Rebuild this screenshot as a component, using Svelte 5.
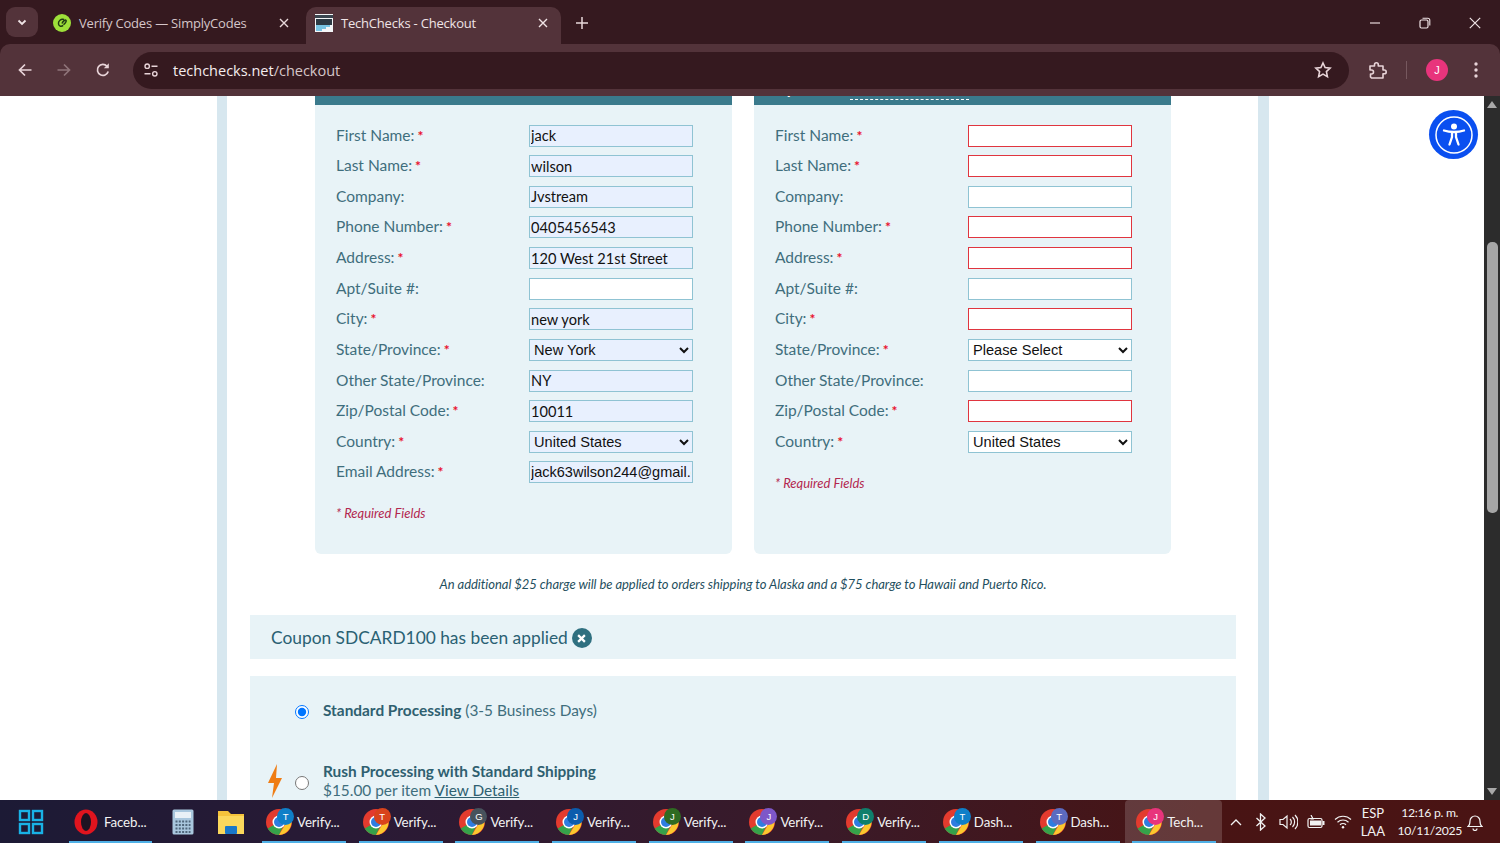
<script>
  // formularios de la pagina de checkout
  const billing = [
    { label: 'First Name:', req: true, value: 'jack' },
    { label: 'Last Name:', req: true, value: 'wilson' },
    { label: 'Company:', value: 'Jvstream' },
    { label: 'Phone Number:', req: true, value: '0405456543' },
    { label: 'Address:', req: true, value: '120 West 21st Street' },
    { label: 'Apt/Suite #:', value: '', blank: true },
    { label: 'City:', req: true, value: 'new york' },
    { label: 'State/Province:', req: true, select: 'New York' },
    { label: 'Other State/Province:', value: 'NY' },
    { label: 'Zip/Postal Code:', req: true, value: '10011' },
    { label: 'Country:', req: true, select: 'United States' },
    { label: 'Email Address:', req: true, value: 'jack63wilson244@gmail.com', mail: true }
  ];

  const shipping = [
    { label: 'First Name:', req: true },
    { label: 'Last Name:', req: true },
    { label: 'Company:' },
    { label: 'Phone Number:', req: true },
    { label: 'Address:', req: true },
    { label: 'Apt/Suite #:' },
    { label: 'City:', req: true },
    { label: 'State/Province:', req: true, select: 'Please Select' },
    { label: 'Other State/Province:' },
    { label: 'Zip/Postal Code:', req: true },
    { label: 'Country:', req: true, select: 'United States' }
  ];

  const apps = [
    { label: 'Verify...', badge: 'T', color: '#0f7fc8' },
    { label: 'Verify...', badge: 'T', color: '#d8431c' },
    { label: 'Verify...', badge: 'G', color: '#47525c' },
    { label: 'Verify...', badge: 'J', color: '#0b5cad' },
    { label: 'Verify...', badge: 'J', color: '#2f6b22' },
    { label: 'Verify...', badge: 'J', color: '#7e57c8' },
    { label: 'Verify...', badge: 'D', color: '#0f7f6c' },
    { label: 'Dash...', badge: 'T', color: '#0f7fc8' },
    { label: 'Dash...', badge: 'T', color: '#5c6bc0' }
  ];
</script>

<div class="screen">
  <header class="browser">
    <div class="tabstrip">
      <button class="tab-menu" aria-label="tabs">
        <svg width="12" height="12" viewBox="0 0 12 12"><path d="M2.5 4.5 6 8l3.5-3.5" fill="none" stroke="#f0e4e6" stroke-width="1.8"/></svg>
      </button>
      <div class="tab">
        <svg class="fav" width="18" height="18" viewBox="0 0 18 18">
          <circle cx="9" cy="9" r="9" fill="#9ee03a"/>
          <path d="M11 5.500C8 4.500 5 7 5.500 10c.4 2.400 3 3 4.600 1.400M9 9.500c.8-2 3-4 4-3.200.9.800-1 3.300-2.600 4.400" fill="none" stroke="#1f3a12" stroke-width="1.500"/>
        </svg>
        <span class="tab-title">Verify Codes — SimplyCodes</span>
        <svg class="close" width="10" height="10" viewBox="0 0 10 10"><path d="M1 1l8 8M9 1 1 9" stroke="#e8d8da" stroke-width="1.400"/></svg>
      </div>
      <div class="tab active">
        <svg class="fav" width="18" height="18" viewBox="0 0 18 18">
          <rect width="18" height="18" fill="#f4f6f8"/>
          <rect y="1" width="18" height="3" fill="#3a4650"/>
          <rect x="1" y="5" width="16" height="6" fill="#2c3a44"/>
          <path d="M1 12h14M1 14h10M1 16h6" stroke="#4fb4dc" stroke-width="1.400"/>
        </svg>
        <span class="tab-title">TechChecks - Checkout</span>
        <svg class="close" width="10" height="10" viewBox="0 0 10 10"><path d="M1 1l8 8M9 1 1 9" stroke="#f0e4e6" stroke-width="1.400"/></svg>
      </div>
      <svg class="plus" width="12" height="12" viewBox="0 0 12 12"><path d="M6 0v12M0 6h12" stroke="#e8d8da" stroke-width="1.500"/></svg>
      <div class="win-controls">
        <svg width="12" height="12" viewBox="0 0 12 12"><path d="M1 6h10" stroke="#e8d8da" stroke-width="1.200"/></svg>
        <svg width="12" height="12" viewBox="0 0 12 12"><rect x="1" y="3" width="8" height="8" rx="1.500" fill="none" stroke="#f0e4e6" stroke-width="1.200"/><path d="M3.500 1.200h5.300a2 2 0 0 1 2 2v5.300" fill="none" stroke="#f0e4e6" stroke-width="1.100"/></svg>
        <svg width="12" height="12" viewBox="0 0 12 12"><path d="M.8.800l10.400 10.400M11.200.800.800 11.200" stroke="#f0e4e6" stroke-width="1.200"/></svg>
      </div>
    </div>
    <div class="toolbar">
      <svg class="nav" width="16" height="16" viewBox="0 0 16 16"><path d="M14.500 8H2.500M8 2.500 2.500 8 8 13.500" fill="none" stroke="#e8d4d8" stroke-width="1.700"/></svg>
      <svg class="nav" width="16" height="16" viewBox="0 0 16 16"><path d="M1.500 8h12M8 2.500 13.500 8 8 13.500" fill="none" stroke="#8f7479" stroke-width="1.700"/></svg>
      <svg class="nav" width="16" height="16" viewBox="0 0 16 16"><path d="M13.200 9.500A5.500 5.500 0 1 1 12 4.200" fill="none" stroke="#e8d4d8" stroke-width="1.700"/><path d="M13.800 1.200v5h-5z" fill="#e8d4d8"/></svg>
      <div class="omnibox">
        <span class="site-info">
          <svg width="16" height="16" viewBox="0 0 16 16"><circle cx="4.200" cy="4.200" r="2.200" fill="none" stroke="#e8d4d8" stroke-width="1.400"/><path d="M8.500 4.200h6M1.500 11.800h6" stroke="#e8d4d8" stroke-width="1.400"/><circle cx="11.800" cy="11.800" r="2.200" fill="none" stroke="#e8d4d8" stroke-width="1.400"/></svg>
        </span>
        <span class="url"><b>techchecks.net</b>/checkout</span>
        <svg class="star" width="18" height="18" viewBox="0 0 18 18"><path d="M9 2l2.100 4.600 5 .6-3.700 3.400 1 5L9 13.100 4.600 15.600l1-5L1.900 7.200l5-.6z" fill="none" stroke="#e8d4d8" stroke-width="1.600"/></svg>
      </div>
      <svg class="ext" width="19" height="19" viewBox="0 0 19 19"><path d="M2 5h4.500V3.700a1.900 1.900 0 0 1 3.800 0V5H15v4h1.300a1.900 1.900 0 0 1 0 3.800H15V17H3.500l-1-1V13h1a2 2 0 0 0 0-4h-1.500z" fill="none" stroke="#e8d4d8" stroke-width="1.600" stroke-linejoin="round"/></svg>
      <span class="sep"></span>
      <span class="avatar">J</span>
      <svg class="dots" width="4" height="16" viewBox="0 0 4 16"><circle cx="2" cy="2" r="1.700" fill="#e8d4d8"/><circle cx="2" cy="8" r="1.700" fill="#e8d4d8"/><circle cx="2" cy="14" r="1.700" fill="#e8d4d8"/></svg>
    </div>
  </header>

  <main class="viewport">
    <div class="page">
      <div class="sheet">
        <div class="forms">
          <section class="panel">
            <h2 class="panel-head">Bill To:</h2>
            <div class="fields">
              {#each billing as f}
                <div class="row">
                  <span class="lbl">{f.label}{#if f.req}<em class="ast">*</em>{/if}</span>
                  {#if f.select}
                    <select class="filled"><option>{f.select}</option></select>
                  {:else}
                    <input class:filled={!f.blank} class:mail={f.mail} value={f.value} />
                  {/if}
                </div>
              {/each}
            </div>
            <p class="required">* Required Fields</p>
          </section>
          <section class="panel">
            <h2 class="panel-head"><span>Ship To:</span> <a href="#same">Same as Billing Info</a></h2>
            <div class="fields">
              {#each shipping as f}
                <div class="row">
                  <span class="lbl">{f.label}{#if f.req}<em class="ast">*</em>{/if}</span>
                  {#if f.select}
                    <select><option>{f.select}</option></select>
                  {:else}
                    <input class:bad={f.req} />
                  {/if}
                </div>
              {/each}
            </div>
            <p class="required">* Required Fields</p>
          </section>
        </div>

        <p class="notice">An additional $25 charge will be applied to orders shipping to Alaska and a $75 charge to Hawaii and Puerto Rico.</p>

        <div class="coupon">
          Coupon SDCARD100 has been applied
          <span class="remove">
            <svg width="9" height="9" viewBox="0 0 8 8"><path d="M1 1l6 6M7 1 1 7" stroke="#fff" stroke-width="2"/></svg>
          </span>
        </div>

        <div class="processing">
          <label class="option first">
            <input type="radio" name="speed" checked />
            <span><b>Standard Processing</b> (3-5 Business Days)</span>
          </label>
          <label class="option">
            <svg class="bolt" width="16" height="34" viewBox="0 0 16 34"><path d="M10 0 1 19h6l-2 15L15 14H9z" fill="#ef7d14"/></svg>
            <input type="radio" name="speed" />
            <span><b>Rush Processing with Standard Shipping</b><br />$15.00 per item <a href="#details">View Details</a></span>
          </label>
        </div>
      </div>
    </div>

    <button class="a11y" aria-label="accessibility">
      <svg width="38" height="38" viewBox="0 0 38 38">
        <circle cx="19" cy="19" r="18" fill="none" stroke="#fff" stroke-width="1.500"/>
        <circle cx="19" cy="10.500" r="3" fill="#fff"/>
        <path d="M9 14.500c3 1 6.500 1.500 10 1.500s7-.5 10-1.500M17 16v5l-2.500 7.500M21 16v5l2.500 7.500" fill="none" stroke="#fff" stroke-width="2.300" stroke-linecap="round"/>
      </svg>
    </button>

    <div class="scrollbar">
      <span class="arrow up"></span>
      <div class="track"><span class="thumb"></span></div>
      <span class="arrow down"></span>
    </div>
  </main>

  <footer class="taskbar">
    <button class="start" aria-label="start">
      <svg width="26" height="26" viewBox="0 0 26 26">
        <g fill="none" stroke="#19b2e6" stroke-width="2.400">
          <rect x="2" y="2" width="9" height="9"/><rect x="15" y="2" width="9" height="9"/>
          <rect x="2" y="15" width="9" height="9"/><rect x="15" y="15" width="9" height="9"/>
        </g>
      </svg>
    </button>
    <div class="task wide">
      <svg width="26" height="26" viewBox="0 0 26 26"><ellipse cx="13" cy="13" rx="11.500" ry="12.500" fill="#e0141e"/><ellipse cx="13" cy="13" rx="5" ry="9" fill="#1e1322"/></svg>
      <span>Faceb...</span>
    </div>
    <div class="task small">
      <svg width="22" height="26" viewBox="0 0 22 26">
        <rect x=".5" y=".5" width="21" height="25" rx="1.500" fill="#a9c7de"/>
        <rect x="3" y="3" width="16" height="6" fill="#e9f1f7"/>
        <path d="M3.500 12.500h15M3.500 16h15M3.500 19.500h15M3.500 23h15" stroke="#50677c" stroke-width="2" stroke-dasharray="2 1.300"/>
      </svg>
    </div>
    <div class="task small last-pin">
      <svg width="28" height="26" viewBox="0 0 28 26">
        <path d="M1 2h10l3 3h13v20H1z" fill="#f5c33b"/>
        <rect x="1" y="7" width="26" height="18" fill="#fbd85c"/>
        <rect x="8" y="17" width="12" height="8" rx="1" fill="#1a78c8"/>
      </svg>
    </div>
    {#each apps as a}
      <div class="task">
        <span class="chrome">
          <svg width="26" height="26" viewBox="0 0 26 26">
            <circle cx="13" cy="13" r="13" fill="#e33b2e"/>
            <path d="M13 13 1.700 19.500A13 13 0 0 0 13 26l6-13z" fill="#35a24a"/>
            <path d="M13 7.500h11.300A13 13 0 0 1 13 26l6.500-11z" fill="#fbc82e"/>
            <circle cx="13" cy="13" r="6.500" fill="#fff"/>
            <circle cx="13" cy="13" r="5" fill="#2f7de1"/>
          </svg>
          <i style="background:{a.color}">{a.badge}</i>
        </span>
        <span>{a.label}</span>
      </div>
    {/each}
    <div class="task current">
      <span class="chrome">
        <svg width="26" height="26" viewBox="0 0 26 26">
          <circle cx="13" cy="13" r="13" fill="#e33b2e"/>
          <path d="M13 13 1.700 19.500A13 13 0 0 0 13 26l6-13z" fill="#35a24a"/>
          <path d="M13 7.500h11.300A13 13 0 0 1 13 26l6.500-11z" fill="#fbc82e"/>
          <circle cx="13" cy="13" r="6.500" fill="#fff"/>
          <circle cx="13" cy="13" r="5" fill="#2f7de1"/>
        </svg>
        <i style="background:#e8347c">J</i>
      </span>
      <span>Tech...</span>
    </div>
    <div class="tray">
      <svg class="chev" width="12" height="8" viewBox="0 0 12 8"><path d="M1 7l5-5 5 5" fill="none" stroke="#f2f2f2" stroke-width="1.300"/></svg>
      <svg class="bt" width="12" height="18" viewBox="0 0 12 18"><path d="M1.500 5l8.500 8-4.500 4V1L10 5l-8.500 8" fill="none" stroke="#f2f2f2" stroke-width="1.300"/></svg>
      <svg width="19" height="16" viewBox="0 0 19 16"><path d="M1 5.500h3L8 2v12l-4-3.500H1z" fill="none" stroke="#f2f2f2" stroke-width="1.200"/><path d="M11 5a4 4 0 0 1 0 6M13.500 3a7 7 0 0 1 0 10M16 1a10 10 0 0 1 0 14" fill="none" stroke="#f2f2f2" stroke-width="1.200"/></svg>
      <svg width="18" height="14" viewBox="0 0 18 14"><rect x="1" y="3.500" width="14" height="9" rx="1.500" fill="none" stroke="#f2f2f2" stroke-width="1.200"/><rect x="3" y="5.500" width="11" height="5" fill="#f2f2f2"/><rect x="15.500" y="6" width="2" height="4" fill="#f2f2f2"/><path d="M4 0l2 4H3.500" fill="none" stroke="#f2f2f2" stroke-width="1.200"/></svg>
      <svg width="18" height="14" viewBox="0 0 18 14"><path d="M1 4.500a11.500 11.500 0 0 1 16 0M3.500 7.200a8 8 0 0 1 11 0M6 9.800a4.300 4.300 0 0 1 6 0" fill="none" stroke="#f2f2f2" stroke-width="1.200"/><circle cx="9" cy="12.300" r="1.200" fill="#f2f2f2"/></svg>
      <div class="lang"><span>ESP</span><span>LAA</span></div>
      <div class="clock"><span>12:16 p. m.</span><span>10/11/2025</span></div>
      <svg class="bell" width="16" height="18" viewBox="0 0 16 18"><path d="M1 13.500c1.500-1 2-2.500 2-5.500a5 5 0 0 1 10 0c0 3 .5 4.500 2 5.500zM6 15.500a2 2 0 0 0 4 0" fill="none" stroke="#f2f2f2" stroke-width="1.200"/></svg>
    </div>
  </footer>
</div>

<style>
  :global(body) {
    margin: 0;
    background: #fff;
  }

  .screen {
    width: 1500px;
    height: 843px;
    display: flex;
    flex-direction: column;
    overflow: hidden;
    font-family: Lato, sans-serif;
  }

  button {
    border: none;
    padding: 0;
    background: none;
  }

  /* NAVEGADOR */
  .browser {
    height: 96px;
    flex: none;
    background: #35191f;
    color: #f0e4e6;
    font-family: "Open Sans", sans-serif;
  }
  .tabstrip {
    height: 44px;
    display: flex;
    align-items: flex-start;
    padding-left: 6px;
    box-sizing: border-box;
  }
  .tab-menu {
    width: 32px;
    height: 30px;
    margin-top: 7px;
    border-radius: 9px;
    background: #53333a;
    display: flex;
    align-items: center;
    justify-content: center;
  }
  .tab {
    width: 264px;
    height: 37px;
    margin-top: 7px;
    display: flex;
    align-items: center;
    padding: 0 8px 6px 15px;
    box-sizing: border-box;
    color: #d6c6c9;
    font-size: 13px;
    letter-spacing: -0.2px;
  }
  .tab.active {
    background: #53333a;
    color: #f0e4e6;
    border-radius: 10px 10px 0 0;
    margin-left: 4px;
    padding-left: 9px;
    width: 255px;
  }
  .fav {
    flex: none;
    margin-right: 8px;
  }
  .tab-title {
    flex: 1;
    white-space: nowrap;
  }
  .close {
    margin-right: 5px;
  }
  .plus {
    margin: 17px 0 0 15px;
  }
  .win-controls {
    margin-left: auto;
    display: flex;
    gap: 38px;
    padding: 17px 19px 0 0;
  }
  .toolbar {
    height: 52px;
    background: #53333a;
    border-radius: 10px 10px 0 0;
    display: flex;
    align-items: center;
    padding-left: 17px;
  }
  .nav {
    margin-right: 23px;
  }
  .omnibox {
    width: 1216px;
    height: 37px;
    margin-left: -1px;
    border-radius: 19px;
    background: #35191f;
    display: flex;
    align-items: center;
    box-sizing: border-box;
    padding: 0 17px 0 10px;
    font-size: 14.5px;
    color: #d6c6c9;
  }
  .site-info {
    width: 16px;
    height: 16px;
    margin-right: 14px;
  }
  .url b {
    font-weight: 400;
    color: #f4ecee;
  }
  .star {
    margin-left: auto;
  }
  .ext {
    margin-left: 19px;
  }
  .sep {
    width: 1px;
    height: 18px;
    background: #76585e;
    margin-left: 19px;
  }
  .avatar {
    width: 22px;
    height: 22px;
    border-radius: 50%;
    background: #e8347c;
    color: #fff;
    font: 11px "Liberation Sans", sans-serif;
    display: flex;
    align-items: center;
    justify-content: center;
    margin-left: 19px;
  }
  .dots {
    margin-left: 26px;
  }

  /* PAGINA */
  .viewport {
    flex: 1;
    min-height: 0;
    position: relative;
    overflow: hidden;
    background: #fff;
  }
  .page {
    width: 1052px;
    margin: -30px 0 0 217px;
    box-sizing: border-box;
    padding: 0 11px 0 10px;
    background: #d7e7ef;
  }
  .sheet {
    background: #fff;
    padding: 0 22px 0 23px;
    height: 900px;
  }
  .forms {
    display: flex;
    gap: 22px;
    margin-left: 65px;
  }
  .panel {
    width: 417px;
    height: 488px;
    background: #e8f3f7;
    border-radius: 0 0 6px 6px;
  }
  .panel-head {
    height: 39px;
    margin: 0;
    box-sizing: border-box;
    padding: 12px 11px 0;
    background: #3a7a8c;
    color: #fff;
    font-size: 16px;
    line-height: 20px;
    font-weight: 700;
    white-space: nowrap;
  }
  .panel-head a {
    color: #fff;
    font-weight: 400;
    font-size: 14px;
    margin-left: 26px;
    padding-bottom: 2px;
    border-bottom: 1px dashed #fff;
    text-decoration: none;
  }
  .fields {
    padding: 19.5px 39px 0 21px;
    display: flex;
    flex-direction: column;
    gap: 8.64px;
  }
  .row {
    display: flex;
    justify-content: space-between;
    height: 22px;
    align-items: flex-start;
  }
  .lbl {
    color: #3f6e7d;
    font-size: 15.5px;
    line-height: 20px;
  }
  .ast {
    color: #e8112d;
    font-style: normal;
    font-weight: 700;
    font-size: 14px;
    margin-left: 3px;
  }
  input:not([type='radio']),
  select {
    width: 164px;
    height: 22px;
    box-sizing: border-box;
    border: 1.5px solid #8fc3d3;
    border-radius: 0;
    background: #fff;
    padding: 0 1px;
    color: #111;
    font-family: Lato, sans-serif;
    font-size: 14.6px;
    outline: none;
  }
  input.filled {
    background: #e8f0fe;
  }
  input.mail {
    font-family: "Liberation Sans", sans-serif;
    font-size: 14.5px;
  }
  input.bad {
    border-color: #e0353f;
  }
  select {
    font-family: "Liberation Sans", sans-serif;
    font-size: 14.6px;
    padding: 0;
  }
  select.filled {
    background: #e8f0fe;
  }
  .required {
    margin: 22px 21px 0;
    color: #b3274f;
    font-size: 13px;
    font-style: italic;
  }
  .notice {
    margin: 21px 0 0;
    text-align: center;
    color: #1f4f5e;
    font-size: 13px;
    line-height: 18px;
    font-style: italic;
    letter-spacing: -0.05px;
  }
  .coupon {
    margin-top: 22px;
    height: 44px;
    background: #e8f3f7;
    display: flex;
    align-items: center;
    gap: 4px;
    padding-left: 21px;
    color: #2a6173;
    font-size: 17.35px;
  }
  .remove {
    width: 20px;
    height: 20px;
    border-radius: 50%;
    background: #2f7080;
    display: flex;
    align-items: center;
    justify-content: center;
    margin-top: 2px;
  }
  .processing {
    margin-top: 17px;
    background: #e8f3f7;
    padding: 25px 0 0 45px;
    color: #3f6e7d;
    font-size: 15.4px;
    line-height: 19px;
    height: 200px;
    box-sizing: border-box;
  }
  .processing b {
    color: #2f6070;
  }
  .processing a {
    color: #2f6070;
  }
  .option {
    display: flex;
    align-items: flex-start;
    gap: 14px;
    position: relative;
  }
  .option.first {
    margin-bottom: 42px;
  }
  .option input {
    width: 14px;
    height: 14px;
    margin: 4px 0 0;
    flex: none;
  }
  .option:not(.first) input {
    margin-top: 14px;
  }
  .bolt {
    position: absolute;
    left: -28px;
    top: 2px;
  }
  .a11y {
    position: absolute;
    top: 14px;
    left: 1429px;
    width: 49px;
    height: 49px;
    border-radius: 50%;
    background: #0a4ff0;
    display: flex;
    align-items: center;
    justify-content: center;
  }
  .scrollbar {
    position: absolute;
    top: 0;
    right: 0;
    bottom: 0;
    width: 16px;
    background: #2c2c2c;
    display: flex;
    flex-direction: column;
    align-items: center;
  }
  .arrow {
    flex: none;
    margin: 5px 0;
    width: 0;
    height: 0;
    border-left: 5px solid transparent;
    border-right: 5px solid transparent;
  }
  .arrow.up {
    border-bottom: 7px solid #a8a8a8;
  }
  .arrow.down {
    border-top: 7px solid #a8a8a8;
  }
  .track {
    flex: 1;
    width: 100%;
    padding-top: 129px;
    box-sizing: border-box;
    display: flex;
    justify-content: center;
  }
  .thumb {
    width: 11px;
    height: 271px;
    border-radius: 5px;
    background: #a6a6a6;
  }

  /* BARRA DE TAREAS */
  .taskbar {
    height: 43px;
    flex: none;
    display: flex;
    align-items: stretch;
    gap: 8px;
    background: linear-gradient(90deg, #1c1a35 0%, #2a1a35 25%, #3a1a28 55%, #481414 80%, #4a1414 100%);
    color: #f2f2f2;
    font-size: 13.3px;
  }
  .start {
    width: 61px;
    display: flex;
    align-items: center;
    justify-content: center;
  }
  .task {
    width: 84px;
    margin-right: 4.7px;
    display: flex;
    align-items: center;
    gap: 5px;
    padding-left: 4px;
    box-sizing: border-box;
    position: relative;
    letter-spacing: -0.1px;
  }
  .task::after {
    content: '';
    position: absolute;
    left: 0;
    right: 0;
    bottom: 0;
    height: 2px;
    background: #4fb0e6;
  }
  .task.wide {
    width: 83px;
    margin-right: 0;
  }
  .task.small {
    width: 46px;
    margin-right: -6px;
    justify-content: center;
    padding-left: 0;
  }
  .task.small.last-pin {
    margin-right: 0;
  }
  .task.small::after {
    display: none;
  }
  .task.current {
    width: 97px;
    margin-left: -7px;
    margin-right: 0;
    padding-left: 11px;
    background: rgba(255, 255, 255, 0.16);
    border-radius: 4px 4px 0 0;
  }
  .task.current::after {
    left: 7px;
    right: 6px;
  }
  .chrome {
    position: relative;
    width: 26px;
    height: 26px;
    flex: none;
    display: flex;
  }
  .chrome i {
    position: absolute;
    top: -1px;
    right: -2px;
    width: 17px;
    height: 17px;
    border-radius: 50%;
    color: #fff;
    font: 9.5px/17px "Liberation Sans", sans-serif;
    text-align: center;
  }
  .tray {
    flex: 1;
    display: flex;
    align-items: center;
    gap: 9px;
    font-size: 13px;
  }
  .chev {
    margin-right: 4px;
  }
  .bt {
    margin-right: 2.5px;
  }
  .lang,
  .clock {
    display: flex;
    flex-direction: column;
    align-items: center;
    line-height: 18px;
  }
  .clock {
    margin-left: 3.5px;
    font-size: 12.2px;
    letter-spacing: -0.3px;
  }
  .bell {
    margin-left: -4px;
  }
</style>
